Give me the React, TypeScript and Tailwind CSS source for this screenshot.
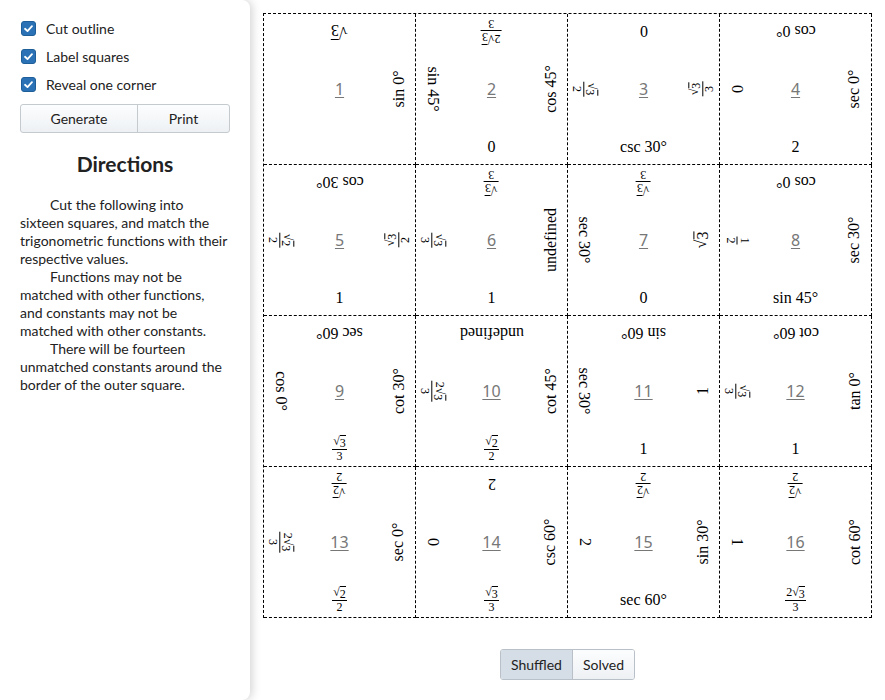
import React from "react";

type Cell = { n: number; t: string; l: string; r: string; b: string };

const cells: Cell[] = [
  { n: 1, t: "r3", l: "", r: "sin 0°", b: "" },
  { n: 2, t: "f:2r3/3", l: "sin 45°", r: "cos 45°", b: "0" },
  { n: 3, t: "0", l: "f:r3/2", r: "f:r3/3", b: "csc 30°" },
  { n: 4, t: "cos 0°", l: "0", r: "sec 0°", b: "2" },
  { n: 5, t: "cos 30°", l: "f:r2/2", r: "f:r3/2", b: "1" },
  { n: 6, t: "f:r3/3", l: "f:r3/3", r: "undefined", b: "1" },
  { n: 7, t: "f:r3/3", l: "sec 30°", r: "r3", b: "0" },
  { n: 8, t: "cos 0°", l: "f:1/2", r: "sec 30°", b: "sin 45°" },
  { n: 9, t: "sec 60°", l: "cos 0°", r: "cot 30°", b: "f:r3/3" },
  { n: 10, t: "undefined", l: "f:2r3/3", r: "cot 45°", b: "f:r2/2" },
  { n: 11, t: "sin 60°", l: "sec 30°", r: "1", b: "1" },
  { n: 12, t: "cot 60°", l: "f:r3/3", r: "tan 0°", b: "1" },
  { n: 13, t: "f:r2/2", l: "f:2r3/3", r: "sec 0°", b: "f:r2/2" },
  { n: 14, t: "2", l: "0", r: "csc 60°", b: "f:r3/3" },
  { n: 15, t: "f:r2/2", l: "2", r: "sin 30°", b: "sec 60°" },
  { n: 16, t: "f:r2/2", l: "1", r: "cot 60°", b: "f:2r3/3" },
];

function Sqrt({ d }: { d: string }) {
  return (
    <span className="inline-flex items-start">
      <span>√</span>
      <span className="border-t border-black leading-none pt-[1px]">{d}</span>
    </span>
  );
}

function Num({ s }: { s: string }) {
  if (s.startsWith("2r")) {
    return (
      <span className="inline-flex items-start">
        <span>2</span>
        <Sqrt d={s.slice(2)} />
      </span>
    );
  }
  if (s.startsWith("r")) return <Sqrt d={s.slice(1)} />;
  return <span>{s}</span>;
}

function Label({ v }: { v: string }) {
  if (!v) return null;
  if (v.startsWith("f:")) {
    const [num, den] = v.slice(2).split("/");
    return (
      <span className="inline-flex flex-col items-center text-[12px] leading-[13px] whitespace-nowrap">
        <span className="px-[1px]">
          <Num s={num} />
        </span>
        <span className="self-stretch h-px bg-black" />
        <span className="px-[1px]">
          <Num s={den} />
        </span>
      </span>
    );
  }
  if (v.startsWith("r")) {
    return (
      <span className="text-[16px] leading-none whitespace-nowrap">
        <Num s={v} />
      </span>
    );
  }
  return <span className="text-[16px] leading-none whitespace-nowrap">{v}</span>;
}

function PuzzleCell({ c }: { c: Cell }) {
  return (
    <div
      className="w-[152px] h-[151px] border-r border-b border-dashed border-black grid grid-cols-[33px_1fr_33px] grid-rows-[34px_1fr_34px]"
      style={{ fontFamily: '"Liberation Serif", serif' }}
    >
      <div />
      <div className="flex items-center justify-center">
        <div className="rotate-180 flex items-center justify-center">
          <Label v={c.t} />
        </div>
      </div>
      <div />
      <div className="flex items-center justify-center">
        <div className="rotate-90 flex items-center justify-center">
          <Label v={c.l} />
        </div>
      </div>
      <div
        className="flex items-center justify-center text-[16px] text-[#777] underline underline-offset-2"
        style={{ fontFamily: '"Noto Sans", sans-serif' }}
      >
        {c.n}
      </div>
      <div className="flex items-center justify-center">
        <div className="-rotate-90 flex items-center justify-center">
          <Label v={c.r} />
        </div>
      </div>
      <div />
      <div className="flex items-center justify-center">
        <Label v={c.b} />
      </div>
      <div />
    </div>
  );
}

function Check({ label }: { label: string }) {
  return (
    <div className="h-[28px] flex items-center gap-[10px]">
      <span className="w-[15px] h-[15px] rounded-[3px] bg-[#2a72b5] border border-[#1f5f99] flex items-center justify-center ml-[1px]">
        <svg width="11" height="11" viewBox="0 0 12 12">
          <path d="M2.2 6.3 L4.9 8.8 L9.8 3.4" fill="none" stroke="white" strokeWidth="2" strokeLinecap="round" strokeLinejoin="round" />
        </svg>
      </span>
      <span className="text-[14px] text-[#222]">{label}</span>
    </div>
  );
}

export default function App() {
  return (
    <div className="flex bg-white min-h-[700px]" style={{ fontFamily: 'Lato, "Noto Sans", sans-serif' }}>
      <aside className="w-[250px] h-[700px] shrink-0 bg-white rounded-r-lg shadow-[2px_0_10px_rgba(0,0,0,0.18)] px-[20px] pt-[14px] relative z-10">
        <Check label="Cut outline" />
        <Check label="Label squares" />
        <Check label="Reveal one corner" />
        <div className="mt-[6px] flex h-[29px] border border-[#c5cacf] rounded-[3px] bg-gradient-to-b from-[#fcfdfe] to-[#eef1f4] text-[14px] text-[#222]">
          <button className="w-[117px] border-r border-[#c5cacf] flex items-center justify-center">Generate</button>
          <button className="flex-1 flex items-center justify-center">Print</button>
        </div>
        <h2 className="mt-[16px] text-center text-[21px] font-bold text-[#222] leading-[30px]">Directions</h2>
        <div className="mt-[17px] text-[14px] leading-[18px] text-[#222]">
          <p className="indent-[30px]">Cut the following into sixteen squares, and match the trigonometric functions with their respective values.</p>
          <p className="indent-[30px]">Functions may not be matched with other functions, and constants may not be matched with other constants.</p>
          <p className="indent-[30px]">There will be fourteen unmatched constants around the border of the outer square.</p>
        </div>
      </aside>
      <main className="flex-1 pl-[13px] pt-[13px]">
        <div className="w-[609px] border-t border-l border-dashed border-black grid grid-cols-4">
          {cells.map((c) => (
            <PuzzleCell key={c.n} c={c} />
          ))}
        </div>
        <div className="w-[609px] flex justify-center mt-[31px]">
          <div className="flex h-[31px] border border-[#b9c0c7] rounded-[3px] overflow-hidden text-[14px] text-[#222]">
            <button className="px-[10px] bg-[#d5dde6] border-r border-[#b9c0c7]">Shuffled</button>
            <button className="px-[10px] bg-gradient-to-b from-[#fcfdfe] to-[#eef1f4]">Solved</button>
          </div>
        </div>
      </main>
    </div>
  );
}
